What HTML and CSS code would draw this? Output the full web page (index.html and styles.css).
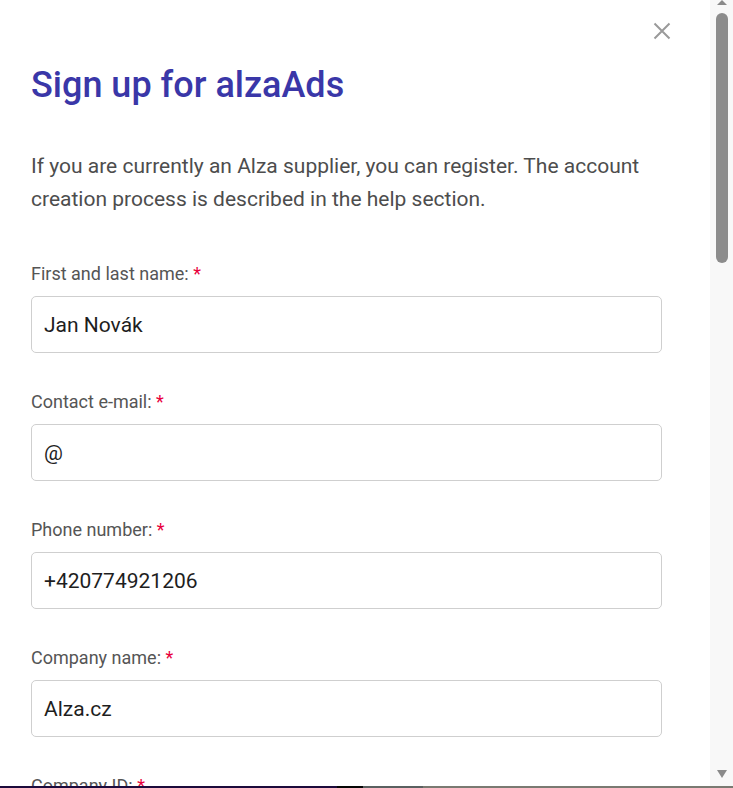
FILE: index.html
```html
<!DOCTYPE html>
<html lang="en">
<head>
<meta charset="utf-8">
<title>Sign up for alzaAds</title>
<link rel="stylesheet" href="styles.css">
</head>
<body>
<div class="screen">
  <div class="dialog">
    <div class="content">
      <div class="topbar">
        <button class="close" aria-label="Close">
          <svg width="18" height="18" viewBox="0 0 18 18"><path d="M1.5 1.5 L16.5 16.5 M16.5 1.5 L1.5 16.5" stroke="#9a9a9a" stroke-width="2" fill="none"/></svg>
        </button>
      </div>
      <h1 class="title">Sign up for alzaAds</h1>
      <p class="intro">If you are currently an Alza supplier, you can register. The account creation process is described in the help section.</p>
      <form class="form">
        <div class="field">
          <label class="label">First and last name: <span class="req">*</span></label>
          <div class="input">Jan Novák</div>
        </div>
        <div class="field">
          <label class="label">Contact e-mail: <span class="req">*</span></label>
          <div class="input">@</div>
        </div>
        <div class="field">
          <label class="label">Phone number: <span class="req">*</span></label>
          <div class="input">+420774921206</div>
        </div>
        <div class="field">
          <label class="label">Company name: <span class="req">*</span></label>
          <div class="input">Alza.cz</div>
        </div>
        <div class="field">
          <label class="label">Company ID: <span class="req">*</span></label>
          <div class="input"></div>
        </div>
      </form>
    </div>
    <div class="scrollbar">
      <div class="arrow up"></div>
      <div class="track"><div class="thumb"></div></div>
      <div class="arrow down"></div>
    </div>
  </div>
  <div class="underlay">
    <span class="u1"></span><span class="u2"></span><span class="u3"></span>
  </div>
</div>
</body>
</html>
```

FILE: styles.css
```css
* { box-sizing: border-box; }
html, body { margin: 0; padding: 0; height: 100%; overflow: hidden; background: #fff; }
body { font-family: Roboto, "Liberation Sans", Arial, sans-serif; }

.screen { display: flex; flex-direction: column; height: 788px; width: 733px; }
.dialog { flex: 1; display: flex; min-height: 0; overflow: hidden; background: #fff; }
.content { flex: 1; padding: 0 48px 0 31px; overflow: hidden; }

.topbar { display: flex; justify-content: flex-end; height: 60px; padding-top: 22px; margin-right: -9px; }
.close { border: 0; background: none; padding: 0; width: 18px; height: 18px; cursor: pointer; }
.close svg { display: block; }

.title { margin: 0; font-size: 36px; line-height: 50px; font-weight: 500; color: #3a37a8; letter-spacing: 0; }

.intro { margin: 40px 0 0; font-size: 21px; line-height: 33px; color: #4d4d4d; }

.form { margin-top: 46px; display: flex; flex-direction: column; gap: 37px; }
.field { display: flex; flex-direction: column; gap: 10px; }
.label { font-size: 18px; line-height: 24px; color: #555; }
.req { color: #e8003d; }
.input { height: 57px; border: 1px solid #cfcfcf; border-radius: 5px; padding: 0 12px; display: flex; align-items: center; font-size: 21px; color: #1e1e1e; }

.scrollbar { width: 23px; background: #f8f8f8; display: flex; flex-direction: column; align-items: center; }
.arrow { width: 0; height: 0; border-left: 5px solid transparent; border-right: 5px solid transparent; }
.arrow.up { border-bottom: 5px solid #8a8a8a; margin-top: 0; height: 0; }
.track { flex: 1; width: 100%; display: flex; justify-content: center; padding-top: 8px; }
.thumb { width: 12px; height: 250px; border-radius: 6px; background: #8c8c8c; }
.arrow.down { border-top: 8px solid #8a8a8a; margin-bottom: 8px; }

.underlay { height: 2px; display: flex; background: #7a7a72; }
.u1 { width: 337px; background: #1c0b3b; }
.u2 { width: 26px; background: #050505; }
.u3 { width: 60px; background: #5a6060; }
```
